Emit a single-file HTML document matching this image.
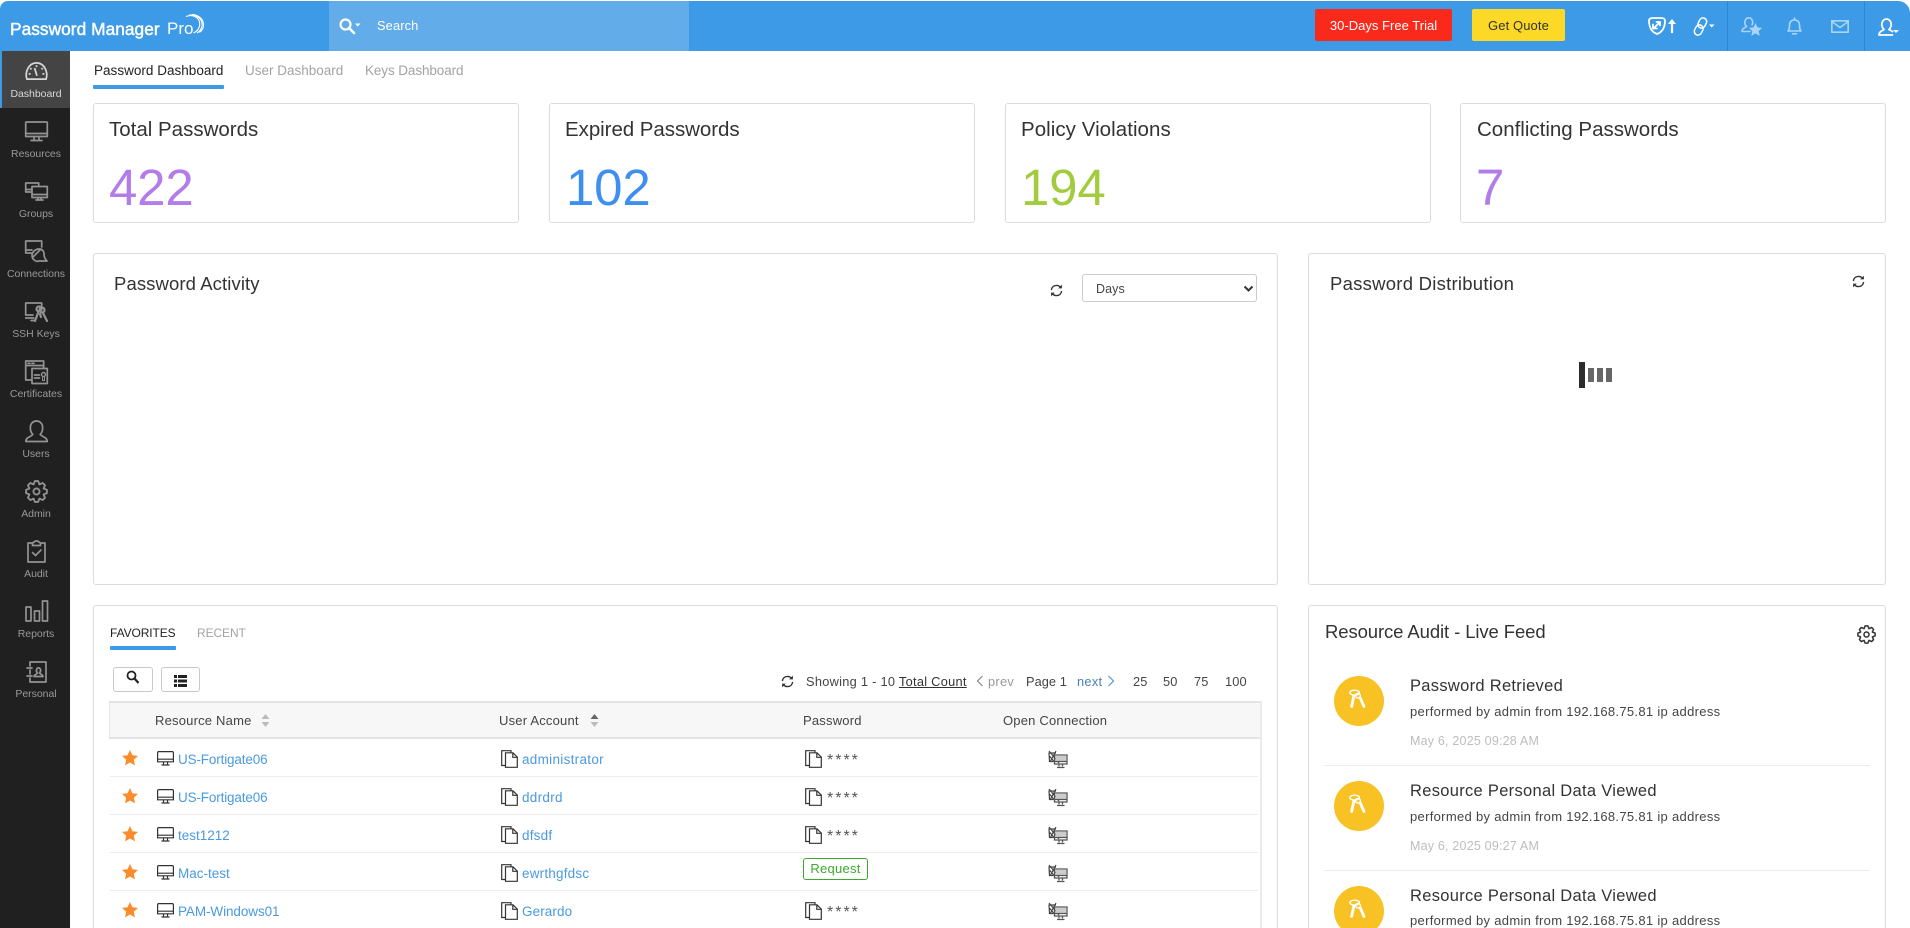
<!DOCTYPE html>
<html lang="en"><head><meta charset="utf-8"><title>Password Manager Pro</title>
<style>
*{box-sizing:border-box}
html,body{margin:0;padding:0;width:1910px;height:928px;overflow:hidden;background:#fff;font-family:"Liberation Sans",Arial,sans-serif;color:#333}
#page{position:relative;width:1910px;height:928px;overflow:hidden;background:#fff}
.a{position:absolute}
.t{position:absolute;white-space:nowrap;line-height:20px;height:20px}
svg{position:absolute;overflow:visible}
#top{position:absolute;left:0;top:1px;width:1910px;height:50px;background:#3d9ae6;border-radius:8px 12px 0 0}
#search{position:absolute;left:329px;top:1px;width:360px;height:50px;background:#62ace9}
#side{position:absolute;left:0;top:51px;width:70px;height:877px;background:#202020}
#act{position:absolute;left:0;top:51px;width:70px;height:57px;background:#444;border-left:2px solid #3d9ae6}
.sl{position:absolute;left:0;width:72px;text-align:center;font-size:10.5px;color:#999;line-height:14px;letter-spacing:-.03px}
.card{position:absolute;top:103px;height:120px;width:426px;border:1px solid #dcdcdc;border-radius:3px;background:#fff}
.ct{font-size:20.5px;color:#333;letter-spacing:0}
.num{position:absolute;top:158px;font-size:51px;line-height:60px;white-space:nowrap;letter-spacing:-.2px}
.panel{position:absolute;border:1px solid #dcdcdc;border-radius:3px;background:#fff}
.pt{font-size:18.5px;color:#333;letter-spacing:.1px}
.lnk{font-size:13.5px;color:#4a9ae0;letter-spacing:0}
.hd{font-size:13px;color:#444;letter-spacing:.2px}
.row{position:absolute;left:110px;width:1148px;height:1px;background:#ececec}
.at{font-size:16.5px;color:#333;letter-spacing:.3px}
.as{font-size:13px;color:#444;letter-spacing:.31px}
.ad{font-size:12.5px;color:#bdbdbd;letter-spacing:.2px}
.pg{font-size:12.8px;color:#444;letter-spacing:.15px}
.ast{font-size:16px;color:#555;letter-spacing:2px}
.ic{fill:none;stroke:#939393;stroke-width:1.7;stroke-linejoin:round;stroke-linecap:round}
.wh{fill:none;stroke:#fff;stroke-width:1.8;stroke-linejoin:round;stroke-linecap:round}
.lb{fill:none;stroke:#a9d6f8;stroke-width:1.6;stroke-linejoin:round;stroke-linecap:round}
</style></head><body>
<div id="page">

<svg width="0" height="0" style="position:absolute"><defs>
<symbol id="star" viewBox="0 0 16 16"><path d="M8 0l2.400 5.300 5.600.6-4.200 3.800 1.200 5.700L8 12.500 3 15.400l1.200-5.700L0 5.900l5.600-.6z" fill="#fb8b2b"/></symbol>
<symbol id="mon" viewBox="0 0 17 15"><path d="M1.600.6h13.800a1 1 0 0 1 1 1v9.200H.6V1.600a1 1 0 0 1 1-1zM.6 8.200h15.800M6.500 11v2.600M10.500 11v2.600M4.500 14h8" fill="none" stroke="#333" stroke-width="1.200"/></symbol>
<symbol id="copy" viewBox="0 0 17 18"><path d="M4.500 15.500H.7V.7h9.300v2M4.500 2.800h7.500l4.300 4.300v10.200H4.500zM11.800 2.800v4.500h4.500" fill="none" stroke="#333" stroke-width="1.200"/></symbol>
<symbol id="conn" viewBox="0 0 20 19"><path d="M8 3H1l.5 8.500h4M1 1l10 12M8 1l-6 11M1 5.500l5 6" fill="none" stroke="#444" stroke-width="1.200"/><path d="M7.500 6h10.500v6H7.500z" fill="#ccc"/><path d="M6.500 5h12.500v9H6.500zM6.500 11.500h12.500M11 14v2.500M14.500 14v2.500M9 17.500h7.500" fill="none" stroke="#555" stroke-width="1.300"/></symbol>
<symbol id="ref" viewBox="0 0 14 14"><path d="M1.500 6.500C1.800 3.500 4 1.500 7 1.500c1.800 0 3.200.7 4.300 2M12.500 7.500c-.3 3-2.500 5-5.500 5-1.800 0-3.200-.7-4.300-2" fill="none" stroke="#333" stroke-width="1.500"/><path d="M12.800.7v4H8.800zM1.200 13.300v-4h4z" fill="#333"/></symbol>
<symbol id="key" viewBox="0 0 20 20"><g fill="none" stroke="#fff" stroke-linecap="round"><ellipse cx="7" cy="3.300" rx="5" ry="2.600" stroke-width="1.500"/><circle cx="10.500" cy="6.500" r="2.500" stroke-width="1.500"/><path d="M6 7.500L3.800 17.800M13 9L16.800 17.800" stroke-width="3"/></g></symbol>
<symbol id="gear" viewBox="0 0 24 24"><path d="M10.280 1.140H13.720L15.060 4.610 18.470 3.100 20.900 5.530 19.390 8.940 22.860 10.280V13.720L19.390 15.060 20.900 18.470 18.470 20.900 15.060 19.390 13.720 22.860H10.280L8.940 19.390 5.530 20.900 3.100 18.470 4.610 15.060 1.140 13.720V10.280L4.610 8.940 3.100 5.530 5.530 3.100 8.940 4.610z" fill="none" stroke="currentColor" stroke-width="1.900" stroke-linejoin="round"/><circle cx="12" cy="12" r="3.200" fill="none" stroke="currentColor" stroke-width="1.900"/></symbol>
</defs></svg>

<!-- top bar -->
<div id="top"></div><div id="search"></div>
<div class="t" style="left:10px;top:19px;font-size:17.300px;color:#fff;letter-spacing:.05px;-webkit-text-stroke:.45px #fff">Password Manager</div>
<div class="t" style="left:167px;top:19px;font-size:17px;color:#fff">Pro</div>
<svg style="left:178px;top:13px" width="28" height="24" viewBox="0 0 28 24"><g fill="none" stroke="#fff" stroke-width="1.100"><path d="M8 3.500C13 1.500 20 3 21.500 9c1 4.500-1.500 9-6 11"/><path d="M11 2C16 1.500 23 4 24 10c.7 4-1.500 8-5 10"/><path d="M14 1.500C19 1.500 25 5 25.500 11c.3 3.500-1.500 6.500-4 8.500"/></g></svg>
<svg style="left:339px;top:18px" width="22" height="17" viewBox="0 0 22 17"><circle cx="6.500" cy="6.500" r="5" fill="none" stroke="#fff" stroke-width="2.200"/><path d="M10 10l5 5" stroke="#fff" stroke-width="2.600" stroke-linecap="round"/><path d="M16 5.500h5.500l-2.750 3z" fill="#fff"/></svg>
<div class="t" style="left:377px;top:16px;font-size:12.800px;color:#fff;letter-spacing:.15px">Search</div>
<div class="a" style="left:1315px;top:9px;width:137px;height:32px;background:#f92a1b;border-radius:2px;color:#fff;font-size:13px;line-height:33px;text-align:center;letter-spacing:.02px">30-Days Free Trial</div>
<div class="a" style="left:1472px;top:9px;width:93px;height:32px;background:#fbd926;border-radius:2px;color:#333;font-size:13px;line-height:33px;text-align:center;letter-spacing:.1px">Get Quote</div>
<svg style="left:1648px;top:17px" width="28" height="18" viewBox="0 0 28 18"><path class="wh" d="M1 3.500C1 2 2.500 1 5 1h8c2.500 0 4 1 4 2.500 0 7-2.500 11.500-8 13.500C3.500 15 1 10.500 1 3.500z"/><path class="wh" stroke-width="1.200" d="M6.500 10.500l5.500-5.500M8.500 5H12v3.500M5 7.500v4h4"/><path d="M24 16V6" stroke="#fff" stroke-width="2.200"/><path d="M20 7l4-5 4 5z" fill="#fff"/></svg>
<svg style="left:1693px;top:17px" width="22" height="19" viewBox="0 0 22 19"><g fill="none" stroke="#fff" stroke-width="1.500" transform="rotate(27 7.500 9.500)"><rect x="3.800" y=".3" width="7.400" height="10.500" rx="3.700"/><rect x="3.800" y="8.200" width="7.400" height="10.500" rx="3.700"/></g><path d="M16 7.500h5.500l-2.750 3z" fill="#fff"/></svg>
<div class="a" style="left:1727px;top:1px;width:1px;height:50px;background:#2f86cd"></div>
<svg style="left:1741px;top:17px" width="21" height="20" viewBox="0 0 21 20"><path class="lb" d="M9 14.500H1c0-3 2.500-3.500 4.500-5C4 8 3.500 6 4 4c.5-2 2-3.200 3.800-3.200S11 2 11.500 4c.3 1.300.2 2.700-.4 3.800"/><path d="M14.500 6l2 4.400 4.600.5-3.400 3.200 1 4.800-4.200-2.500-4.200 2.500 1-4.800-3.400-3.200 4.600-.5z" fill="#a9d6f8"/></svg>
<svg style="left:1787px;top:17px" width="15" height="18" viewBox="0 0 15 18"><path class="lb" d="M1 14c1.500-1.500 1.500-3.500 1.500-6 0-3 2-5 5-5s5 2 5 5c0 2.500 0 4.500 1.500 6zM7.500 1v2M5.500 16.800h4"/></svg>
<svg style="left:1831px;top:20px" width="18" height="13" viewBox="0 0 18 13"><path class="lb" d="M.8.800h16.400v11.400H.8zM.8 1.500l8.200 6 8.200-6"/></svg>
<div class="a" style="left:1864px;top:1px;width:1px;height:50px;background:#2f86cd"></div>
<svg style="left:1878px;top:18px" width="21" height="18" viewBox="0 0 21 18"><path class="wh" d="M14.500 17H1c0-3.500 3-4 5-5.500C4 9.500 3.500 7 4 5c.5-2.500 2.500-4 4.500-4s4 1.500 4.500 4c.5 2 0 4.500-2 6.500 1 .8 2.500 1.200 3.500 2"/><path d="M15 12h6l-3 3z" fill="#fff"/></svg>

<!-- sidebar -->
<div id="side"></div><div id="act"></div>
<svg style="left:25px;top:61px" width="23" height="20" viewBox="0 0 24 20"><path d="M2 18.500C-.5 11 4 1.500 12 1.500s12.500 9.500 10 17z" fill="none" stroke="#d8d8d8" stroke-width="1.800"/><path d="M12 4v2M5.500 7l1.300 1.300M18.500 7l-1.300 1.300M3.800 13h2M20.200 13h-2M10 7l2.500 8" stroke="#d8d8d8" stroke-width="1.800" fill="none"/></svg>
<div class="sl" style="top:87px;color:#dadada">Dashboard</div>
<svg style="left:25px;top:121px" width="23" height="21" viewBox="0 0 23 21"><path class="ic" d="M1.500 1h20a.8.800 0 0 1 .8.800v13.700H.7V1.800a.8.800 0 0 1 .8-.8zM.7 12.500h21.600M9 15.500v3M14 15.500v3M6 19.500h11"/></svg>
<div class="sl" style="top:147px">Resources</div>
<svg style="left:25px;top:182px" width="23" height="19" viewBox="0 0 23 19"><path class="ic" d="M7 10H.7V1h13v3.500M7 4.500h15.300v11H7zM7 12.500h15.300M13 15.500v2M16 15.500v2M11 18h7M.7 7.500H7"/></svg>
<div class="sl" style="top:207px">Groups</div>
<svg style="left:25px;top:240px" width="23" height="23" viewBox="0 0 23 23"><path class="ic" d="M6 13H.7V1h16v6M.7 10H7M8 17l8-8M12 21.500c-3-1-5-3-5-6 0-3 3-6.500 7-6.500 3 0 5 2 5 5 0 2 1 5 3 7h-9"/></svg>
<div class="sl" style="top:267px">Connections</div>
<svg style="left:25px;top:302px" width="23" height="21" viewBox="0 0 23 21"><path class="ic" d="M8 13H.7V1h16v3M.7 16h8M6 18.500h4"/><g fill="none" stroke="#939393" stroke-width="2.200" stroke-linecap="round"><circle cx="14" cy="7" r="2.500"/><circle cx="17" cy="8" r="2.500"/><path d="M13 11l-3 8M18 11l4 8M15 12l1 3"/></g></svg>
<div class="sl" style="top:327px">SSH Keys</div>
<svg style="left:25px;top:360px" width="23" height="25" viewBox="0 0 23 25"><path class="ic" d="M7 20H.7V1h18v7M.7 5.500h18M3 3.300h2M7 3.300h2M7 8.500h15.300v15H7zM9.500 15h5M9.500 18h5"/><circle cx="18.500" cy="14.500" r="2" fill="none" stroke="#939393" stroke-width="1.400"/><path d="M17.500 17v3.500h2V17" stroke="#939393" fill="none"/></svg>
<div class="sl" style="top:387px">Certificates</div>
<svg style="left:25px;top:420px" width="23" height="23" viewBox="0 0 23 23"><path class="ic" d="M.8 21.500c0-4.500 5-4.500 7-7C5.500 12 5 9 5.500 6c.5-3 3-5 6-5s5.500 2 6 5c.5 3 0 6-2.300 8.500 2 2.500 7 2.500 7 7z"/></svg>
<div class="sl" style="top:447px">Users</div>
<svg style="left:25px;top:480px;color:#939393" width="23" height="23" viewBox="0 0 24 24"><use href="#gear"/></svg>
<div class="sl" style="top:507px">Admin</div>
<svg style="left:27px;top:540px" width="19" height="23" viewBox="0 0 19 23"><path class="ic" d="M5.500 3H1v19h17V3h-4.500M5.500 5.500V3l3-2h2l3 2v2.500zM5.500 12.500l3 3 5.500-5.500"/></svg>
<div class="sl" style="top:567px">Audit</div>
<svg style="left:25px;top:600px" width="23" height="22" viewBox="0 0 23 22"><path class="ic" d="M1 7h5v14H1zM9.500 11h5v10h-5zM17.500 1h5v20h-5z"/></svg>
<div class="sl" style="top:627px">Reports</div>
<svg style="left:26px;top:661px" width="21" height="22" viewBox="0 0 21 22"><path class="ic" d="M4 1h16v20H4V17M4 5V1M4 9v4M1 7h5M1 15h5"/><path class="ic" d="M8 15.500c0-2 2.500-2 3.500-3.500-1-1-1.300-2.500-1-3.500.3-1 1-1.700 2-1.700s1.700.7 2 1.700c.3 1 0 2.500-1 3.500 1 1.500 3.500 1.500 3.500 3.500z"/></svg>
<div class="sl" style="top:687px">Personal</div>

<!-- tabs -->
<div class="t" style="left:94px;top:61px;font-size:13.500px;color:#222;letter-spacing:.02px">Password Dashboard</div>
<div class="a" style="left:93px;top:85px;width:131px;height:4px;background:#3d9ae6;border-radius:1px"></div>
<div class="t" style="left:245px;top:61px;font-size:13.500px;color:#a3a3a3;letter-spacing:0">User Dashboard</div>
<div class="t" style="left:365px;top:61px;font-size:13.500px;color:#a3a3a3;letter-spacing:-.1px">Keys Dashboard</div>

<!-- cards -->
<div class="card" style="left:93px"></div>
<div class="card" style="left:549px"></div>
<div class="card" style="left:1005px"></div>
<div class="card" style="left:1460px"></div>
<div class="t ct" style="left:109px;top:120px">Total Passwords</div>
<div class="t ct" style="left:565px;top:120px;letter-spacing:-.05px">Expired Passwords</div>
<div class="t ct" style="left:1021px;top:120px;letter-spacing:.05px">Policy Violations</div>
<div class="t ct" style="left:1477px;top:120px">Conflicting Passwords</div>
<div class="num" style="left:109px;color:#b27ce9">422</div>
<div class="num" style="left:566px;color:#3f8ff0">102</div>
<div class="num" style="left:1021px;color:#a2cc3e">194</div>
<div class="num" style="left:1476px;color:#b27ce9">7</div>

<!-- panels -->
<div class="panel" style="left:93px;top:253px;width:1185px;height:332px"></div>
<div class="panel" style="left:1308px;top:253px;width:578px;height:332px"></div>
<div class="t pt" style="left:114px;top:274px">Password Activity</div>
<div class="t pt" style="left:1330px;top:274px;letter-spacing:.25px">Password Distribution</div>
<svg style="left:1050px;top:284px" width="13" height="13"><use href="#ref"/></svg>
<svg style="left:1852px;top:275px" width="13" height="13"><use href="#ref"/></svg>
<div class="a" style="left:1082px;top:274px;width:175px;height:28px;border:1px solid #ccc;border-radius:3px;background:#fff"></div>
<div class="t" style="left:1096px;top:279px;font-size:12.500px;color:#444;letter-spacing:.1px">Days</div>
<svg style="left:1243px;top:285px" width="11" height="8" viewBox="0 0 11 8"><path d="M1.500 1.500l4 4 4-4" fill="none" stroke="#333" stroke-width="2"/></svg>
<div class="a" style="left:1579px;top:362px;width:6px;height:26px;background:#2b2b2b"></div>
<div class="a" style="left:1588px;top:368px;width:6px;height:14px;background:#666"></div>
<div class="a" style="left:1597px;top:368px;width:6px;height:14px;background:#666"></div>
<div class="a" style="left:1606px;top:368px;width:6px;height:14px;background:#666"></div>

<!-- favorites -->
<div class="panel" style="left:93px;top:605px;width:1185px;height:340px"></div>
<div class="t" style="left:110px;top:623px;font-size:12px;color:#222;letter-spacing:-.1px">FAVORITES</div>
<div class="a" style="left:110px;top:646px;width:66px;height:4px;background:#3d9ae6;border-radius:1px"></div>
<div class="t" style="left:197px;top:623px;font-size:12px;color:#a3a3a3;letter-spacing:-.1px">RECENT</div>
<div class="a" style="left:113px;top:667px;width:40px;height:25px;border:1px solid #c8c8c8;border-radius:3px"></div>
<svg style="left:126px;top:670px" width="14" height="14" viewBox="0 0 14 14"><circle cx="5.500" cy="5.500" r="4" fill="none" stroke="#222" stroke-width="1.800"/><path d="M8.500 8.500l4 4.500" stroke="#222" stroke-width="2.200"/></svg>
<div class="a" style="left:161px;top:667px;width:39px;height:25px;border:1px solid #c8c8c8;border-radius:3px"></div>
<svg style="left:174px;top:675px" width="13" height="12" viewBox="0 0 13 12"><path d="M0 0h3v3H0zM4 0h9v3H4zM0 4.500h3v3H0zM4 4.500h9v3H4zM0 9h3v3H0zM4 9h9v3H4z" fill="#222"/></svg>
<svg style="left:781px;top:675px" width="13" height="13"><use href="#ref"/></svg>
<div class="t pg" style="left:806px;top:672px;letter-spacing:.28px">Showing 1 - 10 <span style="text-decoration:underline;color:#333">Total Count</span></div>
<svg style="left:976px;top:675px" width="8" height="12" viewBox="0 0 8 12"><path d="M6.500 1L1.500 6l5 5" fill="none" stroke="#888" stroke-width="1.200"/></svg>
<div class="t pg" style="left:988px;top:672px;color:#999;letter-spacing:.3px">prev</div>
<div class="t pg" style="left:1026px;top:672px;letter-spacing:.05px">Page 1</div>
<div class="t pg" style="left:1077px;top:672px;color:#4a80b8;letter-spacing:.3px">next</div>
<svg style="left:1107px;top:675px" width="8" height="12" viewBox="0 0 8 12"><path d="M1.500 1l5 5-5 5" fill="none" stroke="#4a9ae0" stroke-width="1.200"/></svg>
<div class="t pg" style="left:1133px;top:672px">25</div>
<div class="t pg" style="left:1163px;top:672px">50</div>
<div class="t pg" style="left:1194px;top:672px">75</div>
<div class="t pg" style="left:1225px;top:672px">100</div>
<div class="a" style="left:1260px;top:701px;width:2px;height:227px;background:#ebebeb"></div>
<div class="a" style="left:109px;top:701px;width:1151px;height:38px;background:#f7f7f7;border-top:2px solid #e4e4e4;border-bottom:2px solid #e4e4e4;border-left:1px solid #e4e4e4"></div>
<div class="t hd" style="left:155px;top:711px">Resource Name</div>
<svg style="left:261px;top:714px" width="9" height="13" viewBox="0 0 9 13"><path d="M4.500 0l4 5H.5zM4.500 13l4-5H.5z" fill="#bbb"/></svg>
<div class="t hd" style="left:499px;top:711px">User Account</div>
<svg style="left:590px;top:714px" width="9" height="13" viewBox="0 0 9 13"><path d="M4.500 0l4 5H.5z" fill="#666"/><path d="M4.500 13l4-5H.5z" fill="#bbb"/></svg>
<div class="t hd" style="left:803px;top:711px">Password</div>
<div class="t hd" style="left:1003px;top:711px">Open Connection</div>
<div class="row" style="top:776px"></div><div class="row" style="top:814px"></div><div class="row" style="top:852px"></div><div class="row" style="top:890px"></div>

<!-- row 1 -->
<svg style="left:122px;top:750px" width="16" height="16"><use href="#star"/></svg>
<svg style="left:157px;top:751px" width="17" height="15"><use href="#mon"/></svg>
<div class="t lnk" style="left:178px;top:750px;letter-spacing:-.15px">US-Fortigate06</div>
<svg style="left:501px;top:750px" width="17" height="18"><use href="#copy"/></svg>
<div class="t lnk" style="left:522px;top:750px;letter-spacing:.3px">administrator</div>
<svg style="left:805px;top:750px" width="17" height="18"><use href="#copy"/></svg>
<div class="t ast" style="left:827px;top:751px">****</div>
<svg style="left:1048px;top:750px" width="20" height="19"><use href="#conn"/></svg>
<!-- row 2 -->
<svg style="left:122px;top:788px" width="16" height="16"><use href="#star"/></svg>
<svg style="left:157px;top:789px" width="17" height="15"><use href="#mon"/></svg>
<div class="t lnk" style="left:178px;top:788px;letter-spacing:-.15px">US-Fortigate06</div>
<svg style="left:501px;top:788px" width="17" height="18"><use href="#copy"/></svg>
<div class="t lnk" style="left:522px;top:788px;letter-spacing:.3px">ddrdrd</div>
<svg style="left:805px;top:788px" width="17" height="18"><use href="#copy"/></svg>
<div class="t ast" style="left:827px;top:789px">****</div>
<svg style="left:1048px;top:788px" width="20" height="19"><use href="#conn"/></svg>
<!-- row 3 -->
<svg style="left:122px;top:826px" width="16" height="16"><use href="#star"/></svg>
<svg style="left:157px;top:827px" width="17" height="15"><use href="#mon"/></svg>
<div class="t lnk" style="left:178px;top:826px">test1212</div>
<svg style="left:501px;top:826px" width="17" height="18"><use href="#copy"/></svg>
<div class="t lnk" style="left:522px;top:826px;letter-spacing:.2px">dfsdf</div>
<svg style="left:805px;top:826px" width="17" height="18"><use href="#copy"/></svg>
<div class="t ast" style="left:827px;top:827px">****</div>
<svg style="left:1048px;top:826px" width="20" height="19"><use href="#conn"/></svg>
<!-- row 4 -->
<svg style="left:122px;top:864px" width="16" height="16"><use href="#star"/></svg>
<svg style="left:157px;top:865px" width="17" height="15"><use href="#mon"/></svg>
<div class="t lnk" style="left:178px;top:864px">Mac-test</div>
<svg style="left:501px;top:864px" width="17" height="18"><use href="#copy"/></svg>
<div class="t lnk" style="left:522px;top:864px;letter-spacing:.2px">ewrthgfdsc</div>
<div class="a" style="left:803px;top:858px;width:65px;height:22px;border:1px solid #3caa2c;border-radius:3px;color:#3caa2c;font-size:13px;line-height:20px;text-align:center;letter-spacing:.25px">Request</div>
<svg style="left:1048px;top:864px" width="20" height="19"><use href="#conn"/></svg>
<!-- row 5 -->
<svg style="left:122px;top:902px" width="16" height="16"><use href="#star"/></svg>
<svg style="left:157px;top:903px" width="17" height="15"><use href="#mon"/></svg>
<div class="t lnk" style="left:178px;top:902px;letter-spacing:-.08px">PAM-Windows01</div>
<svg style="left:501px;top:902px" width="17" height="18"><use href="#copy"/></svg>
<div class="t lnk" style="left:522px;top:902px;letter-spacing:.1px">Gerardo</div>
<svg style="left:805px;top:902px" width="17" height="18"><use href="#copy"/></svg>
<div class="t ast" style="left:827px;top:903px">****</div>
<svg style="left:1048px;top:902px" width="20" height="19"><use href="#conn"/></svg>

<!-- audit -->
<div class="panel" style="left:1308px;top:605px;width:578px;height:340px"></div>
<div class="t pt" style="left:1325px;top:622px;letter-spacing:-.1px">Resource Audit - Live Feed</div>
<svg style="left:1857px;top:625px;color:#333" width="19" height="19" viewBox="0 0 24 24"><use href="#gear"/></svg>

<div class="a" style="left:1334px;top:676px;width:50px;height:50px;border-radius:50%;background:#f8c224"></div>
<svg style="left:1348px;top:689px" width="19" height="20"><use href="#key"/></svg>
<div class="t at" style="left:1410px;top:676px">Password Retrieved</div>
<div class="t as" style="left:1410px;top:702px">performed by admin from 192.168.75.81 ip address</div>
<div class="t ad" style="left:1410px;top:731px">May 6, 2025 09:28 AM</div>
<div class="a" style="left:1324px;top:765px;width:546px;height:1px;background:#ececec"></div>

<div class="a" style="left:1334px;top:781px;width:50px;height:50px;border-radius:50%;background:#f8c224"></div>
<svg style="left:1348px;top:794px" width="19" height="20"><use href="#key"/></svg>
<div class="t at" style="left:1410px;top:781px">Resource Personal Data Viewed</div>
<div class="t as" style="left:1410px;top:807px">performed by admin from 192.168.75.81 ip address</div>
<div class="t ad" style="left:1410px;top:836px">May 6, 2025 09:27 AM</div>
<div class="a" style="left:1324px;top:870px;width:546px;height:1px;background:#ececec"></div>

<div class="a" style="left:1334px;top:886px;width:50px;height:50px;border-radius:50%;background:#f8c224"></div>
<svg style="left:1348px;top:899px" width="19" height="20"><use href="#key"/></svg>
<div class="t at" style="left:1410px;top:886px">Resource Personal Data Viewed</div>
<div class="t as" style="left:1410px;top:911px">performed by admin from 192.168.75.81 ip address</div>

</div>
</body></html>
